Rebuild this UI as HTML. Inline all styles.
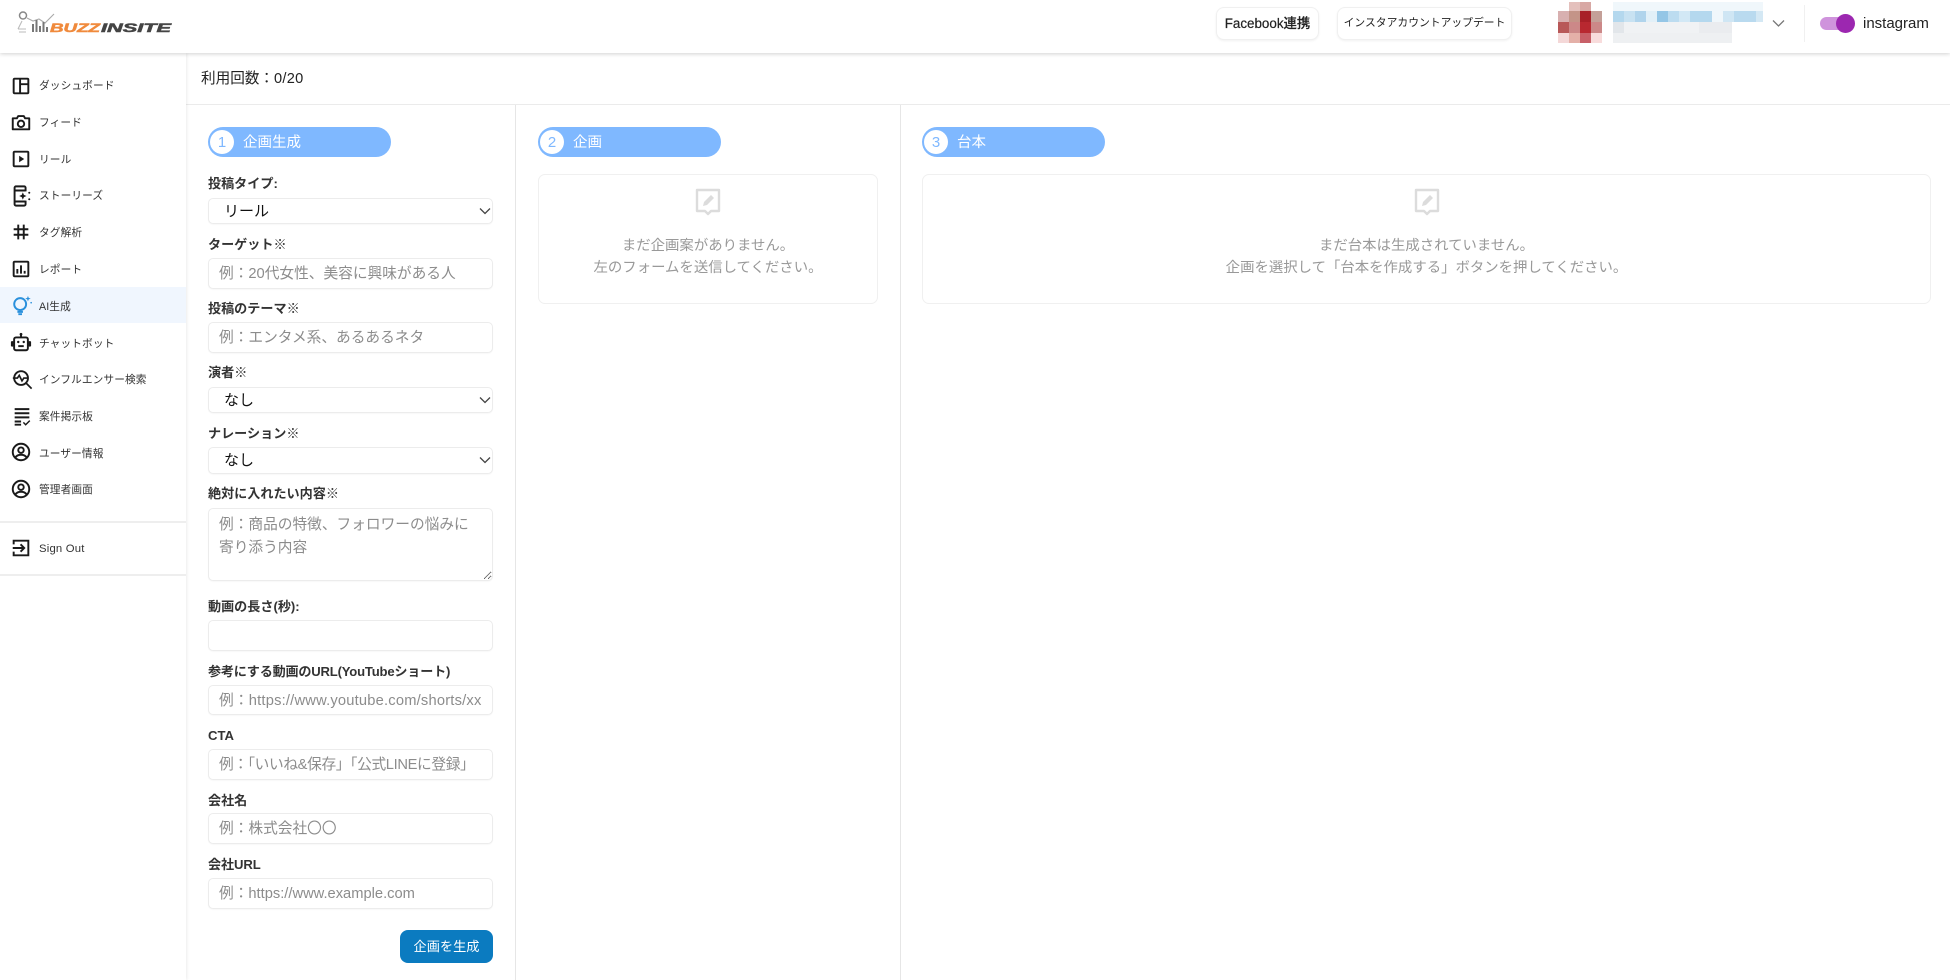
<!DOCTYPE html>
<html lang="ja"><head><meta charset="utf-8"><title>BuzzInsite</title>
<style>
*{box-sizing:border-box}
html,body{margin:0;padding:0;width:1950px;height:980px;overflow:hidden;background:#fff;font-family:"Liberation Sans","Noto Sans CJK JP",sans-serif;color:#222}
#wrap{position:absolute;left:0;top:0;width:1950px;height:980px;filter:blur(.35px);background:#fff;overflow:hidden}
.a{position:absolute;white-space:nowrap}
.hdr{position:absolute;left:0;top:0;width:1950px;height:53px;background:#fff;box-shadow:0 1px 4px rgba(0,0,0,.18);z-index:5}
.btn{position:absolute;top:7px;height:33px;border:1px solid #f0f0f0;border-radius:8px;background:#fff;box-shadow:0 1px 2px rgba(0,0,0,.06);text-align:center;line-height:31px;color:#222}
.side{position:absolute;left:0;top:53px;width:186px;height:927px;background:#fff;box-shadow:1px 0 3px rgba(0,0,0,.08);z-index:3}
.nav{position:absolute;left:39px;font-size:10.7px;line-height:16px;color:#333;letter-spacing:.1px;white-space:nowrap;z-index:4}
.ic{position:absolute;left:10px;width:22px;height:22px;fill:none;stroke:#1a1a1a;stroke-width:2.100;z-index:4}
.lb{position:absolute;left:208px;font-size:13.1px;font-weight:700;line-height:18px;color:#333;white-space:nowrap}
.lb span{font-weight:400}
.f{position:absolute;left:208px;width:285px;border:1px solid #ececec;border-radius:5px;background:#fff;font-family:inherit;font-size:14.7px;padding:0 10px;margin:0;color:#111;outline:0;box-shadow:0 1px 1px rgba(0,0,0,.03)}
.f::placeholder{color:#8c8c8c;opacity:1}
select.f{appearance:none;-webkit-appearance:none;padding-left:15px;font-size:15px}
textarea.f{padding:5px 10px;line-height:22.5px;resize:both;overflow:hidden}
.chev{position:absolute;left:479px;width:12px;height:8px;fill:none;stroke:#444;stroke-width:1.3}
.pill{position:absolute;top:127px;width:183px;height:30px;border-radius:15px;background:#7fb8ff;color:#fff;font-size:14.5px;line-height:32px;padding-left:35px;white-space:nowrap}
.pill i{position:absolute;left:2px;top:3px;width:24px;height:24px;border-radius:50%;background:#fff;color:#7fb8ff;font-style:normal;font-size:15px;line-height:25px;text-align:center;padding:0}
.vl{position:absolute;top:105px;width:1px;height:875px;background:#e6e6e6}
.card{position:absolute;top:174px;height:130px;border:1px solid #f0f0f0;border-radius:7px;background:#fff;text-align:center;color:#999;font-size:14.4px;line-height:22px;padding-top:60px}
.card svg{position:absolute;left:50%;top:13px;margin-left:-13px;width:26px;height:28px}
.cell{position:absolute}
</style></head><body><div id="wrap">

<div class="hdr">
<svg class="a" style="left:16px;top:10px" width="156" height="26" viewBox="0 0 156 26">
<g fill="none" stroke="#888" stroke-width="1.1"><circle cx="7" cy="5.500" r="3.500" stroke-width="1.500"/><path d="M11 8l6 3 6-2 6 4 9-9" stroke="#aaa"/><path d="M6 11l-4 8M2 19h8M3 22h7" stroke="#bbb"/></g>
<g fill="#777"><rect x="16" y="14" width="2" height="8"/><rect x="19.500" y="10" width="2" height="12"/><rect x="23" y="16" width="2" height="6"/><rect x="26.500" y="12" width="2" height="10"/><rect x="30" y="17" width="2" height="5"/></g>
<text x="34" y="22" font-family="Liberation Sans" font-weight="700" font-style="italic" font-size="11.500" fill="#f08a3c" stroke="#f08a3c" stroke-width=".5" textLength="50" lengthAdjust="spacingAndGlyphs">BUZZ</text>
<text x="85" y="22" font-family="Liberation Sans" font-weight="700" font-style="italic" font-size="11.500" fill="#444" stroke="#444" stroke-width=".5" textLength="70" lengthAdjust="spacingAndGlyphs">INSITE</text>
</svg>
<div class="btn" style="left:1216px;width:103px;font-size:13.4px;font-weight:500;-webkit-text-stroke:.2px #222">Facebook連携</div>
<div class="btn" style="left:1337px;width:175px;font-size:10.8px">インスタアカウントアップデート</div>

<div class="cell" style="left:1569px;top:2px;width:11px;height:9px;background:#e4c0bc"></div>
<div class="cell" style="left:1580px;top:2px;width:11px;height:9px;background:#d8a8a4"></div>
<div class="cell" style="left:1558px;top:11px;width:11px;height:11px;background:#d8b0b0"></div>
<div class="cell" style="left:1569px;top:11px;width:11px;height:11px;background:#c49488"></div>
<div class="cell" style="left:1580px;top:11px;width:11px;height:11px;background:#a82028"></div>
<div class="cell" style="left:1591px;top:11px;width:11px;height:11px;background:#c4a098"></div>
<div class="cell" style="left:1558px;top:22px;width:11px;height:11px;background:#b85858"></div>
<div class="cell" style="left:1569px;top:22px;width:11px;height:11px;background:#cc8888"></div>
<div class="cell" style="left:1580px;top:22px;width:11px;height:11px;background:#b82830"></div>
<div class="cell" style="left:1591px;top:22px;width:11px;height:11px;background:#cc8888"></div>
<div class="cell" style="left:1558px;top:33px;width:11px;height:10px;background:#f4d8d8"></div>
<div class="cell" style="left:1569px;top:33px;width:11px;height:10px;background:#e4b0a8"></div>
<div class="cell" style="left:1580px;top:33px;width:11px;height:10px;background:#c86068"></div>
<div class="cell" style="left:1591px;top:33px;width:11px;height:10px;background:#f8dcdc"></div>

<div class="cell" style="left:1613px;top:2px;width:150px;height:9px;background:#f0f7fb"></div>
<div class="cell" style="left:1613px;top:11px;width:11px;height:11px;background:#b4d8ee"></div>
<div class="cell" style="left:1624px;top:11px;width:11px;height:11px;background:#c8e2f2"></div>
<div class="cell" style="left:1635px;top:11px;width:11px;height:11px;background:#b0d4ec"></div>
<div class="cell" style="left:1646px;top:11px;width:11px;height:11px;background:#e2f0f8"></div>
<div class="cell" style="left:1657px;top:11px;width:11px;height:11px;background:#94c6e6"></div>
<div class="cell" style="left:1668px;top:11px;width:11px;height:11px;background:#bcdcf0"></div>
<div class="cell" style="left:1679px;top:11px;width:11px;height:11px;background:#d2e8f5"></div>
<div class="cell" style="left:1690px;top:11px;width:22px;height:11px;background:#b4d8ee"></div>
<div class="cell" style="left:1712px;top:11px;width:11px;height:11px;background:#f0f7fb"></div>
<div class="cell" style="left:1723px;top:11px;width:11px;height:11px;background:#cfe6f4"></div>
<div class="cell" style="left:1734px;top:11px;width:22px;height:11px;background:#b9daef"></div>
<div class="cell" style="left:1756px;top:11px;width:7px;height:11px;background:#d4e8f4"></div>
<div class="cell" style="left:1613px;top:22px;width:11px;height:11px;background:#e2e6ea"></div>
<div class="cell" style="left:1624px;top:22px;width:108px;height:11px;background:#f0f2f4"></div>
<div class="cell" style="left:1699px;top:22px;width:33px;height:11px;background:#eaecef"></div>
<div class="cell" style="left:1613px;top:33px;width:119px;height:10px;background:#eef0f2"></div>

<svg class="a" style="left:1772px;top:19px" width="13" height="9" viewBox="0 0 13 9"><path d="M1 1.500l5.500 5.500L12 1.500" fill="none" stroke="#777" stroke-width="1.300"/></svg>
<div class="cell" style="left:1804px;top:5px;width:1px;height:37px;background:#f0f0f0"></div>
<div class="cell" style="left:1820px;top:17px;width:30px;height:13px;border-radius:7px;background:#cf93dc"></div>
<div class="cell" style="left:1836px;top:14px;width:19px;height:19px;border-radius:50%;background:#9c27b0"></div>
<div class="a" style="left:1863px;top:14px;font-size:15px;line-height:20px;color:#222">instagram</div>
</div>

<div class="side">
<div class="a" style="left:0;top:234px;width:186px;height:36px;background:#f0f6fe"></div>
<div class="a" style="left:0;top:468px;width:186px;height:2px;background:#eee"></div>
<div class="a" style="left:0;top:521px;width:186px;height:2px;background:#eee"></div>
</div>

<svg class="ic" style="top:75px" viewBox="0 0 24 24"><rect x="4" y="4" width="16" height="16" rx="1"/><path d="M11 4v16M11 10h9"/></svg>
<div class="nav" style="top:78px">ダッシュボード</div>
<svg class="ic" style="top:111px" viewBox="0 0 24 24"><path d="M3 8h4.500L9 5.500h6L16.500 8H21v12H3z" stroke-linejoin="round"/><circle cx="12" cy="14" r="3.500"/></svg>
<div class="nav" style="top:115px">フィード</div>
<svg class="ic" style="top:148px" viewBox="0 0 24 24"><rect x="4" y="4" width="16" height="16" rx="1"/><path d="M10 8.500l5.500 3.500-5.500 3.500z" fill="#1a1a1a" stroke="none"/></svg>
<div class="nav" style="top:152px">リール</div>
<svg class="ic" style="top:185px" viewBox="0 0 24 24"><path d="M17 7V3a1.500 1.500 0 0 0-1.500-1.500h-9A1.500 1.500 0 0 0 5 3v18a1.500 1.500 0 0 0 1.500 1.500h9A1.500 1.500 0 0 0 17 21v-4M5 6h12M5 18h12"/><path d="M14 8l1.200 2.800L18 12l-2.800 1.200L14 16l-1.200-2.800L10 12l2.800-1.200z" fill="#1a1a1a" stroke="none"/><circle cx="21" cy="8.500" r="1.100" fill="#1a1a1a" stroke="none"/><circle cx="21" cy="15.500" r="1.100" fill="#1a1a1a" stroke="none"/></svg>
<div class="nav" style="top:188px">ストーリーズ</div>
<svg class="ic" style="top:221px" viewBox="0 0 24 24"><path d="M9 4v16M15 4v16M4 9h16M4 15h16"/></svg>
<div class="nav" style="top:225px">タグ解析</div>
<svg class="ic" style="top:258px" viewBox="0 0 24 24"><rect x="4" y="4" width="16" height="16" rx="1"/><path d="M8 17v-5M12 17V8M16 17v-3"/></svg>
<div class="nav" style="top:262px">レポート</div>
<svg class="ic" style="top:294px;left:11px;stroke:#2a90dc" viewBox="0 0 24 24"><circle cx="10" cy="11" r="6.500"/><path d="M7 19.500h6M8 22h4"/><path d="M18.500 2l.8 2.200 2.200.8-2.200.8-.8 2.200-.8-2.200-2.200-.8 2.200-.8z" fill="#2a90dc" stroke="none"/><circle cx="22" cy="9.500" r=".9" fill="#2a90dc" stroke="none"/></svg>
<div class="nav" style="top:299px">AI生成</div>
<svg class="ic" style="top:331px" viewBox="0 0 24 24"><rect x="4.500" y="7" width="15" height="14" rx="2"/><path d="M12 3v4"/><circle cx="12" cy="3.500" r="1.500" fill="#1a1a1a" stroke="none"/><rect x="1" y="11" width="3" height="6" rx="1" fill="#1a1a1a" stroke="none"/><rect x="20" y="11" width="3" height="6" rx="1" fill="#1a1a1a" stroke="none"/><circle cx="9" cy="12" r="1.300" fill="#1a1a1a" stroke="none"/><circle cx="15" cy="12" r="1.300" fill="#1a1a1a" stroke="none"/><path d="M9 16.500h6"/></svg>
<div class="nav" style="top:336px">チャットボット</div>
<svg class="ic" style="top:368px;left:11px" viewBox="0 0 24 24"><circle cx="11" cy="11" r="7.500"/><path d="M16.500 16.500l6 6M2 11h5l2-3 3 6 2-3h4" stroke-width="1.800"/></svg>
<div class="nav" style="top:372px">インフルエンサー検索</div>
<svg class="ic" style="top:405px;left:11px" viewBox="0 0 24 24"><path d="M4 4.500h16M4 9h16M4 13.500h16M4 18h7M4 21.500h7"/><path d="M13.500 19l2.500 2.500 4.500-4.500" stroke-width="1.600"/></svg>
<div class="nav" style="top:409px">案件掲示板</div>
<svg class="ic" style="top:441px" viewBox="0 0 24 24"><circle cx="12" cy="12" r="9"/><circle cx="12" cy="10" r="3"/><path d="M5.500 18.500c1.500-2.500 4-3.500 6.500-3.500s5 1 6.500 3.500"/></svg>
<div class="nav" style="top:446px">ユーザー情報</div>
<svg class="ic" style="top:478px" viewBox="0 0 24 24"><circle cx="12" cy="12" r="9"/><circle cx="12" cy="10" r="3"/><path d="M5.500 18.500c1.500-2.500 4-3.500 6.500-3.500s5 1 6.500 3.500"/></svg>
<div class="nav" style="top:482px">管理者画面</div>
<svg class="ic" style="top:537px" viewBox="0 0 24 24"><path d="M4 8V4h16v16H4v-4M3 12h12M11.500 8l4 4-4 4"/></svg>
<div class="nav" style="top:541px;font-size:11.300px;letter-spacing:.2px">Sign Out</div>

<div class="a" style="left:186px;top:104px;width:1764px;height:1px;background:#ebebeb"></div>
<div class="a" style="left:201px;top:69px;font-size:14.600px;line-height:20px;color:#222">利用回数：<span style="letter-spacing:.3px">0/20</span></div>

<div class="vl" style="left:515px"></div>
<div class="vl" style="left:900px"></div>

<div class="pill" style="left:208px"><i>1</i>企画生成</div>
<div class="pill" style="left:538px"><i>2</i>企画</div>
<div class="pill" style="left:922px"><i>3</i>台本</div>

<div class="lb" style="top:175px">投稿タイプ:</div>
<select class="f" style="top:198px;height:26px"><option>リール</option></select>
<svg class="chev" style="top:207px" viewBox="0 0 12 8"><path d="M1 1.500l5 5 5-5"/></svg>
<div class="lb" style="top:236px">ターゲット<span>※</span></div>
<input class="f" style="top:258px;height:31px" placeholder="例：20代女性、美容に興味がある人">
<div class="lb" style="top:300px">投稿のテーマ<span>※</span></div>
<input class="f" style="top:322px;height:31px" placeholder="例：エンタメ系、あるあるネタ">
<div class="lb" style="top:364px">演者<span>※</span></div>
<select class="f" style="top:387px;height:26px"><option>なし</option></select>
<svg class="chev" style="top:396px" viewBox="0 0 12 8"><path d="M1 1.500l5 5 5-5"/></svg>
<div class="lb" style="top:425px">ナレーション<span>※</span></div>
<select class="f" style="top:447px;height:27px"><option>なし</option></select>
<svg class="chev" style="top:456px" viewBox="0 0 12 8"><path d="M1 1.500l5 5 5-5"/></svg>
<div class="lb" style="top:485px">絶対に入れたい内容<span>※</span></div>
<textarea class="f" style="top:508px;height:73px" placeholder="例：商品の特徴、フォロワーの悩みに寄り添う内容"></textarea>
<div class="lb" style="top:598px">動画の長さ(秒):</div>
<input class="f" style="top:620px;height:31px">
<div class="lb" style="top:663px;letter-spacing:-.2px">参考にする動画のURL(YouTubeショート)</div>
<input class="f" style="top:685px;height:30px;letter-spacing:.2px;padding-top:1px" placeholder="例：https://www.youtube.com/shorts/xx">
<div class="lb" style="top:727px">CTA</div>
<input class="f" style="top:749px;height:31px;letter-spacing:-.35px" placeholder="例：「いいね&amp;保存」「公式LINEに登録」">
<div class="lb" style="top:792px">会社名</div>
<input class="f" style="top:813px;height:31px" placeholder="例：株式会社〇〇">
<div class="lb" style="top:856px;letter-spacing:-.1px">会社URL</div>
<input class="f" style="top:878px;height:31px" placeholder="例：https://www.example.com">
<div class="a" style="left:400px;top:930px;width:93px;height:33px;border-radius:8px;background:#0b7bc0;color:#fff;font-size:13.200px;line-height:33px;text-align:center">企画を生成</div>

<div class="card" style="left:538px;width:340px">
<svg viewBox="0 0 26 28"><path d="M2 2h22v21h-8l-3 3-3-3H2z" fill="none" stroke="#dcdcdc" stroke-width="2.400" stroke-linejoin="round"/><path d="M8 18l1-4 7-7 3 3-7 7z" fill="#dcdcdc"/></svg>
まだ企画案がありません。<br>左のフォームを送信してください。</div>
<div class="card" style="left:922px;width:1009px">
<svg viewBox="0 0 26 28"><path d="M2 2h22v21h-8l-3 3-3-3H2z" fill="none" stroke="#dcdcdc" stroke-width="2.400" stroke-linejoin="round"/><path d="M8 18l1-4 7-7 3 3-7 7z" fill="#dcdcdc"/></svg>
まだ台本は生成されていません。<br>企画を選択して「台本を作成する」ボタンを押してください。</div>
</div></body></html>
